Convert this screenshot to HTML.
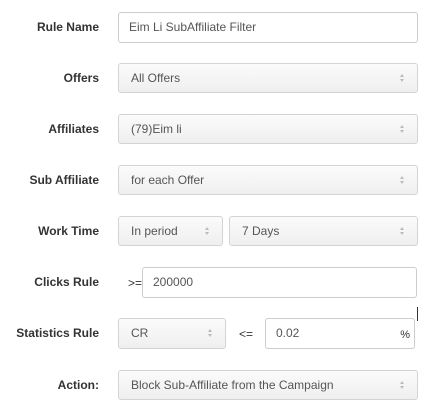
<!DOCTYPE html>
<html><head><style>
body{margin:0;width:428px;height:406px;background:#fff;font-family:"Liberation Sans",sans-serif;position:relative;overflow:hidden}
.l{position:absolute;right:329px;font-weight:bold;font-size:12px;color:#333;line-height:14px}
.b{position:absolute;box-sizing:border-box;border:1px solid #d4d4d4;border-radius:3px;font-size:12px;color:#555;line-height:28px;padding-left:12px;white-space:nowrap}
.s{background:linear-gradient(#fbfbfb,#efefef)}
.i{background:#fff;padding-left:10px;border-color:#ccc}
.a{position:absolute;right:12px;top:10px;width:5px;height:8px}
.a:before,.a:after{content:"";position:absolute;left:0;border-left:2.5px solid transparent;border-right:2.5px solid transparent}
.a:before{top:0;border-bottom:3px solid #bbb}
.a:after{bottom:0;border-top:3px solid #bbb}
.t{position:absolute;font-size:12px;color:#333}
</style></head><body>
<div class="l" style="top:20px">Rule Name</div>
<div class="b i" style="left:118px;top:12px;width:300px;height:31px;line-height:29px">Eim Li SubAffiliate Filter</div>
<div class="l" style="top:71px">Offers</div>
<div class="b s" style="left:118px;top:63px;width:300px;height:30px">All Offers<span class="a"></span></div>
<div class="l" style="top:122px">Affiliates</div>
<div class="b s" style="left:118px;top:114px;width:300px;height:30px">(79)Eim li<span class="a"></span></div>
<div class="l" style="top:173px">Sub Affiliate</div>
<div class="b s" style="left:118px;top:165px;width:300px;height:30px">for each Offer<span class="a"></span></div>
<div class="l" style="top:224px">Work Time</div>
<div class="b s" style="left:118px;top:216px;width:105px;height:30px">In period<span class="a"></span></div>
<div class="b s" style="left:229px;top:216px;width:189px;height:30px">7 Days<span class="a"></span></div>
<div class="l" style="top:275px">Clicks Rule</div>
<div class="t" style="left:128px;top:276px">&gt;=</div>
<div class="b i" style="left:142px;top:267px;width:275px;height:31px;line-height:29px">200000</div>
<div style="position:absolute;left:417px;top:307px;width:1px;height:14px;background:#333"></div>
<div class="l" style="top:326px">Statistics Rule</div>
<div class="b s" style="left:118px;top:318px;width:108px;height:31px">CR<span class="a"></span></div>
<div class="t" style="left:239px;top:327px">&lt;=</div>
<div class="b i" style="left:265px;top:318px;width:150px;height:31px;line-height:29px">0.02<span style="position:absolute;right:4px;top:2px;font-size:11px;color:#333">%</span></div>
<div class="l" style="top:378px">Action:</div>
<div class="b s" style="left:118px;top:370px;width:300px;height:30px">Block Sub-Affiliate from the Campaign<span class="a"></span></div>
</body></html>
